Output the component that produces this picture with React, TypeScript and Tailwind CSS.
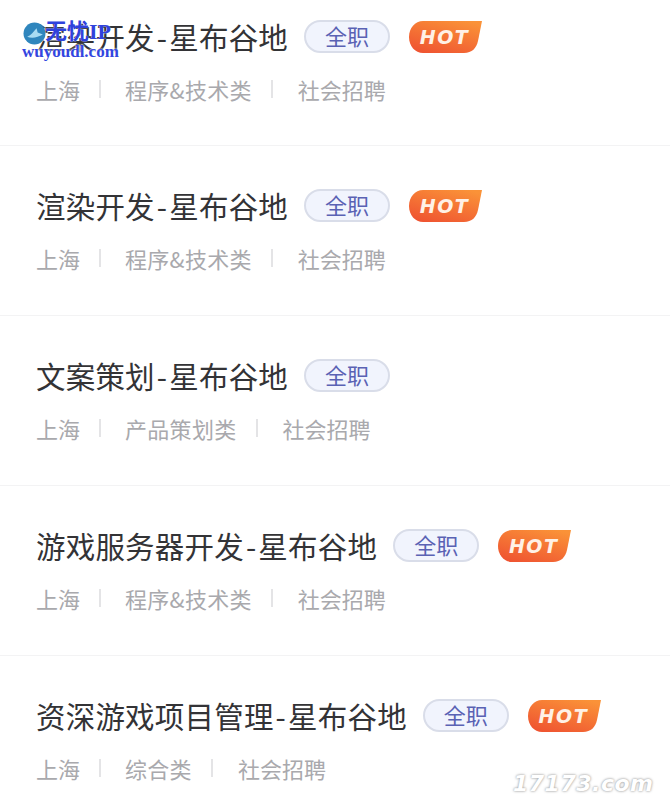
const jobs = [
  { title: "渲染开发-星布谷地", category: "程序&技术类", hot: true, first: true },
  { title: "渲染开发-星布谷地", category: "程序&技术类", hot: true },
  { title: "文案策划-星布谷地", category: "产品策划类", hot: false },
  { title: "游戏服务器开发-星布谷地", category: "程序&技术类", hot: true },
  { title: "资深游戏项目管理-星布谷地", category: "综合类", hot: true },
];

function HotBadge({ id }: { id: string }) {
  return (
    <div className="relative w-[74px] h-[34px] pt-[2px] flex items-center justify-center">
      <svg className="absolute inset-0" width="74" height="34" viewBox="0 0 74 34">
        <defs>
          <linearGradient id={id} x1="0.8" y1="0" x2="0.2" y2="1">
            <stop offset="0" stopColor="#fa9238" />
            <stop offset="1" stopColor="#ef5431" />
          </linearGradient>
        </defs>
        <path d="M14 1H73L69 21C67.5 28 63 33 55 33H14C6 33 0 26 0 17C0 8 6 1 14 1Z" fill={`url(#${id})`} />
      </svg>
      <span className="relative pr-[3px] text-[19px] leading-none font-bold italic tracking-[1.5px] text-[#fff1e6] font-['DejaVu_Sans',sans-serif]">
        HOT
      </span>
    </div>
  );
}

function Separator() {
  return <div className="w-[2px] h-[18px] bg-[#e4e4e6]" />;
}

function JobRow({ job }: { job: (typeof jobs)[number] }) {
  const [name, studio] = job.title.split("-");
  return (
    <div className={`${job.first ? "h-[146px] pt-[19px]" : "h-[170px] pt-[42px]"} border-b border-[#f3f3f4] pl-[36px]`}>
      <div className="flex items-center h-[34px]">
        <h2 className="text-[29.5px] leading-[34px] font-normal tracking-[0.2px] text-[#333336]">
          {name}
          <span className="px-[2px]">-</span>
          {studio}
        </h2>
        <span className="ml-[16px] mt-[1px] w-[86px] h-[33px] pb-[3px] flex items-center justify-center rounded-full border-2 border-[#d9dde9] bg-[#f1f4fd] text-[22px] leading-none text-[#5a62b4]">
          全职
        </span>
        {job.hot && (
          <div className="ml-[19px] mt-[1px]">
            <HotBadge id={`hot-${job.title}-${job.first ? 1 : 0}`} />
          </div>
        )}
      </div>
      <div className="flex items-center mt-[21px] h-[30px] text-[22px] leading-[30px] text-[#a9a9ad]">
        <span>上海</span>
        <div className="ml-[19px] mr-[24px]"><Separator /></div>
        <span className="tracking-[0.3px]">{job.category}</span>
        <div className="ml-[19px] mr-[25px]"><Separator /></div>
        <span>社会招聘</span>
      </div>
    </div>
  );
}

export default function App() {
  return (
    <div className="relative w-[670px] h-[805px] overflow-hidden bg-white font-['Noto_Sans_CJK_SC','Noto_Sans',sans-serif]">
      {jobs.map((job, i) => (
        <JobRow key={i} job={job} />
      ))}

      {/* wuyou watermark */}
      <div className="absolute left-[22px] top-[22px] w-[96px] h-[38px]">
        <svg className="absolute left-[1px] top-0" width="23" height="23" viewBox="0 0 22 22">
          <circle cx="11" cy="11" r="10.5" fill="#2f86bd" />
          <path d="M4 14C8 13 10 9 13 6L14 10L19 12C14 15 8 16 4 14Z" fill="#a9dcf2" />
        </svg>
        <span className="absolute left-[23px] top-[-6px] text-[22px] leading-[32px] font-bold text-[#2f42dc] font-['Liberation_Serif','Noto_Sans_CJK_SC',serif] whitespace-nowrap [text-shadow:0_0_1px_#fff]">
          无忧IP
        </span>
        <span className="absolute left-0 top-[21px] text-[17px] leading-[18px] font-bold text-[#3346e0] font-['Liberation_Serif',serif] whitespace-nowrap [text-shadow:0_0_2px_#fff,0_0_2px_#fff]">
          wuyoudl.com
        </span>
      </div>

      {/* site watermark */}
      <div className="absolute left-[513px] top-[769px] text-[22px] leading-[30px] font-bold italic tracking-[0.5px] text-white font-['DejaVu_Sans',sans-serif] [text-shadow:0_0_3px_#a8a8a8,0_0_2px_#b8b8b8]">
        17173.com
      </div>
    </div>
  );
}
